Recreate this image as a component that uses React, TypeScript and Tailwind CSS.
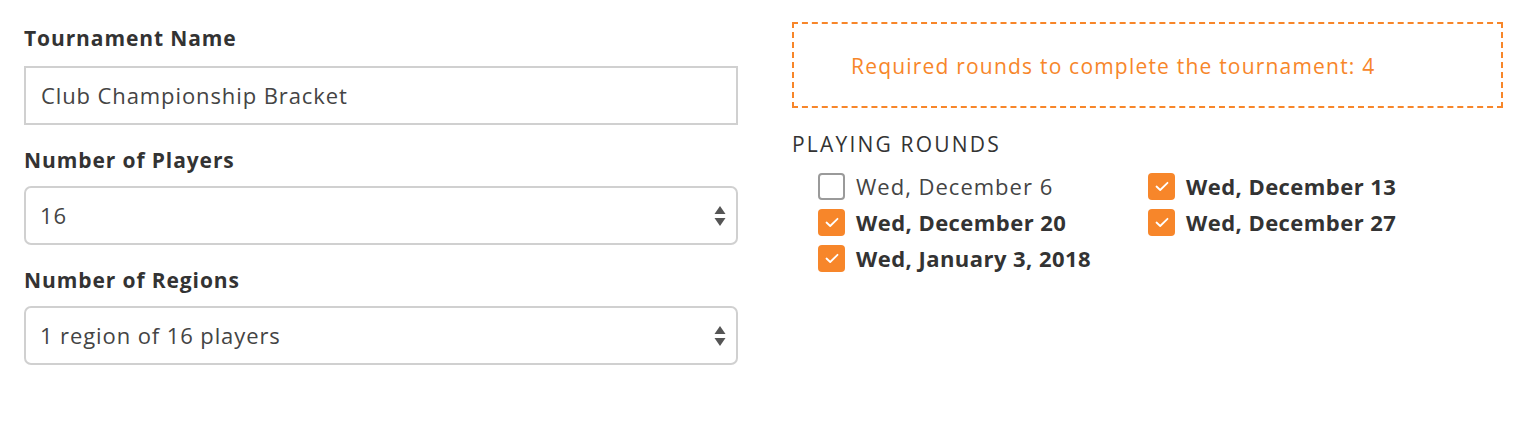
import React from "react";

const font = { fontFamily: "'Open Sans', Lato, sans-serif" };

const rounds = [
  { label: "Wed, December 6", checked: false },
  { label: "Wed, December 13", checked: true },
  { label: "Wed, December 20", checked: true },
  { label: "Wed, December 27", checked: true },
  { label: "Wed, January 3, 2018", checked: true },
];

const SelectArrows = () => (
  <svg width="12" height="24" viewBox="0 0 12 24" className="shrink-0">
    <path d="M6 2 L11.5 10 L0.5 10 Z" fill="#555" />
    <path d="M6 22 L11.5 14 L0.5 14 Z" fill="#555" />
  </svg>
);

const Checkbox = ({ checked }: { checked: boolean }) =>
  checked ? (
    <span className="flex h-[27px] w-[27px] shrink-0 items-center justify-center rounded-[4px] bg-[#f7862a]">
      <svg width="14" height="11" viewBox="0 0 14 11">
        <path d="M1.5 5.5 L5.2 9 L12.5 1.8" fill="none" stroke="#fff" strokeWidth="1.8" strokeLinecap="round" strokeLinejoin="round" />
      </svg>
    </span>
  ) : (
    <span className="h-[27px] w-[27px] shrink-0 rounded-[4px] border-2 border-[#9a9a9a] bg-white" />
  );

const App = () => {
  return (
    <div className="flex h-[426px] w-[1538px] bg-white pl-6 text-[#333]" style={font}>
      <div className="flex w-[714px] flex-col pt-[24px]">
        <label className="text-[21px] leading-[28px] font-bold tracking-[0.9px] text-[#333]">Tournament Name</label>
        <div className="mt-[14px] flex h-[59px] items-center border-2 border-[#d0d0d0] px-[15px] text-[22px] tracking-[0.9px] text-[#444]">
          Club Championship Bracket
        </div>

        <label className="mt-[21px] text-[21px] leading-[28px] font-bold tracking-[0.9px] text-[#333]">Number of Players</label>
        <div className="mt-[12px] flex h-[59px] items-center justify-between rounded-[7px] border-2 border-[#d0d0d0] pr-[10px] pl-[14px] text-[22px] tracking-[0.9px] text-[#444]">
          <span>16</span>
          <SelectArrows />
        </div>

        <label className="mt-[21px] text-[21px] leading-[28px] font-bold tracking-[0.9px] text-[#333]">Number of Regions</label>
        <div className="mt-[12px] flex h-[59px] items-center justify-between rounded-[7px] border-2 border-[#d0d0d0] pr-[10px] pl-[14px] text-[22px] tracking-[0.9px] text-[#444]">
          <span>1 region of 16 players</span>
          <SelectArrows />
        </div>
      </div>

      <div className="ml-[54px] flex w-[711px] flex-col pt-[22px]">
        <div className="flex h-[86px] items-center border-2 border-dashed border-[#f7862a] pt-[3px] pl-[57px] text-[21px] tracking-[1.2px] text-[#f7862a]">
          Required rounds to complete the tournament: 4
        </div>
        <div className="mt-[22px] text-[21px] leading-[28px] tracking-[2.2px] uppercase text-[#333]">Playing Rounds</div>
        <div className="mt-[15px] grid w-[686px] grid-cols-2 gap-y-[9px] pl-[26px]">
          {rounds.map((r) => (
            <div key={r.label} className="flex items-center gap-[11px]">
              <Checkbox checked={r.checked} />
              <span
                className={`text-[22px] leading-[27px] ${
                  r.checked ? "font-bold tracking-[0.45px] text-[#333]" : "tracking-[1px] text-[#444]"
                }`}
              >
                {r.label}
              </span>
            </div>
          ))}
        </div>
      </div>
    </div>
  );
};

export default App;
